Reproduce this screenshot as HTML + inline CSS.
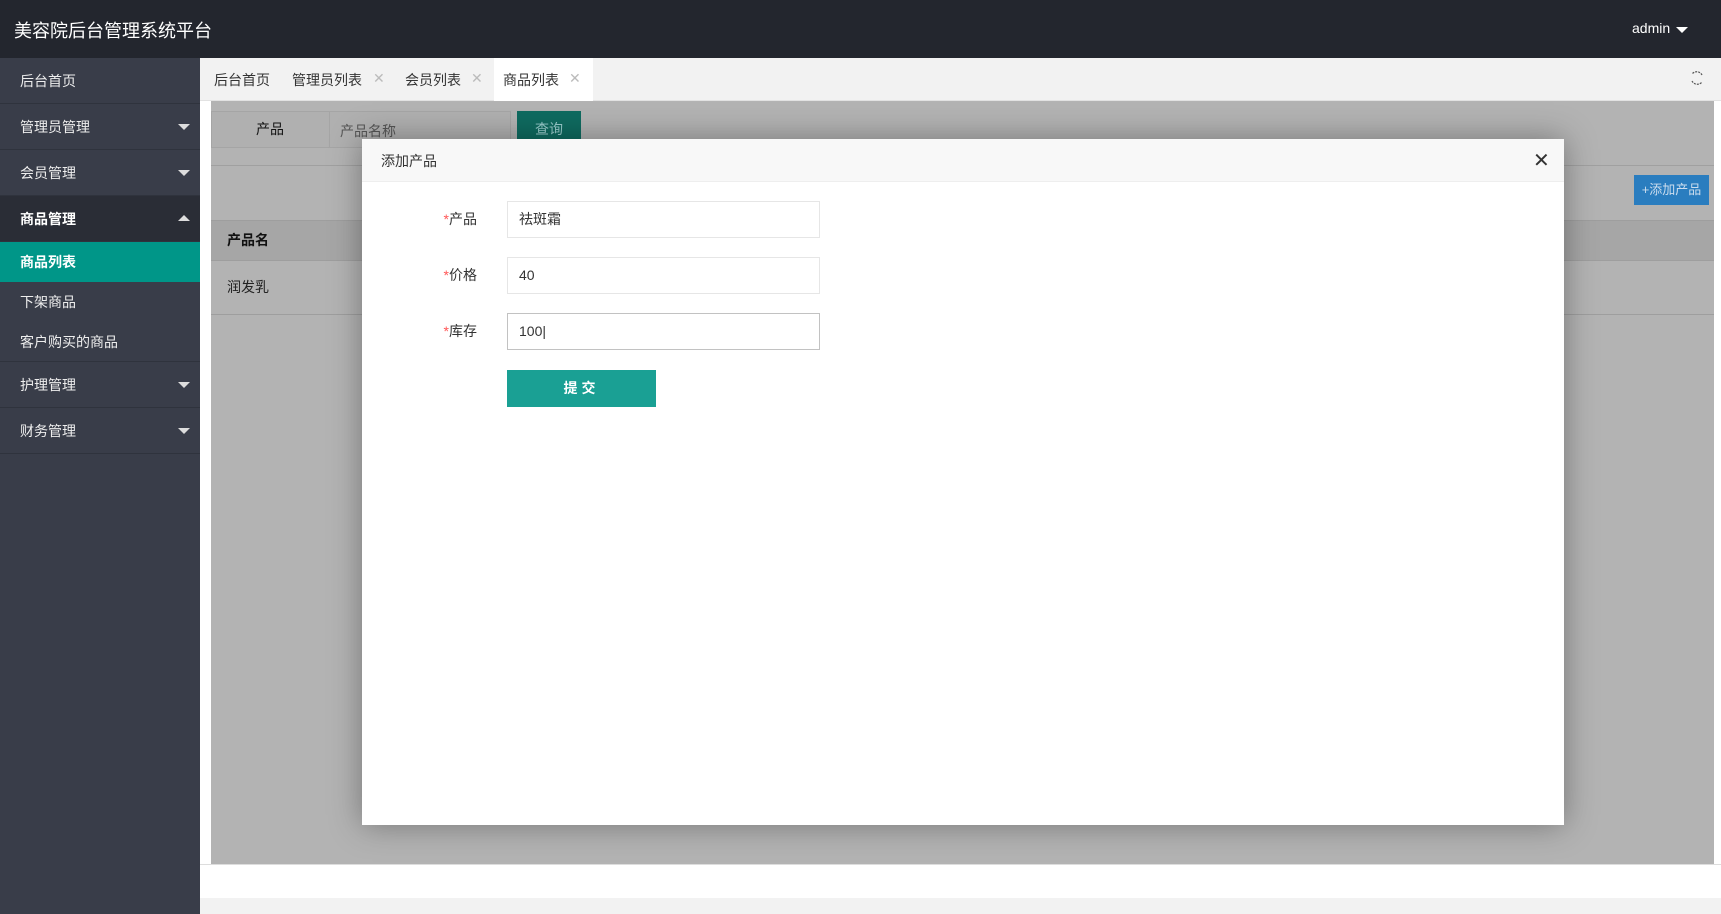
<!DOCTYPE html>
<html><head><meta charset="utf-8"><style>
*{margin:0;padding:0;box-sizing:border-box}
body{width:1721px;height:914px;overflow:hidden;position:relative;background:#fff;font-family:"Liberation Sans","Noto Sans CJK SC",sans-serif;font-size:14px;color:#333}
.a{position:absolute}
.hdr{left:0;top:0;width:1721px;height:58px;background:#23262e}
.side{left:0;top:58px;width:200px;height:856px;background:#393d49}
.mi{position:absolute;left:0;width:200px;color:#eee;font-size:14px;padding-left:20px;border-bottom:1px solid #2f333d}
.tri{position:absolute;right:10px;width:0;height:0;border-left:6px solid transparent;border-right:6px solid transparent}
.dn{border-top:6px solid #ddd;top:20px}
.up{border-bottom:6px solid #ddd;top:19px}
.tabs{left:200px;top:58px;width:1521px;height:43px;background:#f2f2f2;border-bottom:1px solid #e2e2e2}
.tab{position:absolute;top:12px;font-size:14px;color:#333}
.x{position:absolute;top:12px;color:#bbb;font-size:14px}
.gray{left:211px;top:101px;width:1503px;height:763px;background:#b3b3b3}
.modal{left:362px;top:139px;width:1202px;height:686px;background:#fff;box-shadow:0 0 30px rgba(0,0,0,.35)}
.lab{position:absolute;width:115px;text-align:right;left:0;font-size:14px;color:#333}
.inp{position:absolute;left:145px;width:313px;height:37px;border:1px solid #e6e6e6;padding-left:11px;line-height:35px;font-size:14px;color:#333}
</style></head><body>
<div class="a hdr"><div class="a" style="left:14px;top:17px;color:#fff;font-size:18px">美容院后台管理系统平台</div>
<div class="a" style="left:1632px;top:20px;color:#fff;font-size:14px">admin</div>
<div class="a" style="left:1676px;top:27px;border-left:6px solid transparent;border-right:6px solid transparent;border-top:6px solid #fff"></div></div>
<div class="a side">
<div class="mi" style="top:0;height:46px;line-height:46px">后台首页</div>
<div class="mi" style="top:46px;height:46px;line-height:46px">管理员管理<span class="tri dn"></span></div>
<div class="mi" style="top:92px;height:46px;line-height:46px">会员管理<span class="tri dn"></span></div>
<div class="mi" style="top:138px;height:46px;line-height:46px;background:#2a2d36;color:#fff;font-weight:bold">商品管理<span class="tri up"></span></div>
<div class="mi" style="top:184px;height:40px;line-height:40px;background:#009688;color:#fff;font-weight:bold;border:none">商品列表</div>
<div class="mi" style="top:224px;height:40px;line-height:40px;border:none">下架商品</div>
<div class="mi" style="top:264px;height:40px;line-height:40px">客户购买的商品</div>
<div class="mi" style="top:304px;height:46px;line-height:46px">护理管理<span class="tri dn"></span></div>
<div class="mi" style="top:350px;height:46px;line-height:46px">财务管理<span class="tri dn"></span></div>
</div>
<div class="a tabs">
<div class="tab" style="left:14px">后台首页</div>
<div class="tab" style="left:92px">管理员列表</div><div class="x" style="left:173px">✕</div>
<div class="tab" style="left:205px">会员列表</div><div class="x" style="left:271px">✕</div>
<div class="a" style="left:294px;top:0;width:99px;height:43px;background:#fff"></div>
<div class="tab" style="left:303px">商品列表</div><div class="x" style="left:369px">✕</div>
<svg class="a" style="left:1489px;top:12px" width="16" height="16" viewBox="0 0 16 16"><path d="M13 5A6 6 0 0 0 3 4M3 11a6 6 0 0 0 10 1" stroke="#555" stroke-width="1.2" fill="none" stroke-dasharray="2 1"/></svg>
</div>
<div class="a" style="left:200px;top:864px;width:1521px;height:34px;background:#fff;border-top:1px solid #ddd"></div>
<div class="a" style="left:200px;top:898px;width:1521px;height:16px;background:#f2f2f2"></div>
<div class="a gray">
<div class="a" style="left:0;top:10px;width:300px;height:37px;border:1px solid #a5a5a5;background:#b0b0b0"></div>
<div class="a" style="left:0;top:10px;width:119px;height:37px;border-right:1px solid #a5a5a5;text-align:center;line-height:37px;color:#111">产品</div>
<div class="a" style="left:129px;top:20px;color:#555">产品名称</div>
<div class="a" style="left:306px;top:10px;width:64px;height:37px;background:#0f6b60;color:#9cc;text-align:center;line-height:37px">查询</div>
<div class="a" style="left:0;top:64px;width:1503px;height:1px;background:#a0a0a0"></div>
<div class="a" style="left:1423px;top:74px;width:75px;height:30px;background:#2a7dbf;color:#cde;text-align:center;line-height:30px;font-size:13px">+添加产品</div>
<div class="a" style="left:0;top:119px;width:1503px;height:41px;background:#a6a6a6;border-top:1px solid #9e9e9e;border-bottom:1px solid #9e9e9e"></div>
<div class="a" style="left:16px;top:129px;color:#111;font-weight:bold">产品名</div>
<div class="a" style="left:0;top:213px;width:1503px;height:1px;background:#9e9e9e"></div>
<div class="a" style="left:16px;top:176px;color:#222">润发乳</div>
</div>
<div class="a modal">
<div class="a" style="left:0;top:0;width:1202px;height:43px;background:#f8f8f8;border-bottom:1px solid #eee"></div>
<div class="a" style="left:19px;top:12px;font-size:14px;color:#333">添加产品</div>
<div class="a" style="left:1171px;top:9px;font-size:20px;color:#333">✕</div>
<div class="a" style="left:0;top:62px;width:600px;height:300px">
<div class="lab" style="top:8px"><span style="color:#f55">*</span>产品</div>
<div class="inp" style="top:0">祛斑霜</div>
<div class="lab" style="top:64px"><span style="color:#f55">*</span>价格</div>
<div class="inp" style="top:56px">40</div>
<div class="lab" style="top:120px"><span style="color:#f55">*</span>库存</div>
<div class="inp" style="top:112px;border-color:#c2c2c2">100|</div>
<div class="a" style="left:145px;top:169px;width:149px;height:37px;background:#1aa094;color:#fff;text-align:center;line-height:37px;font-weight:bold;letter-spacing:4px">提交</div>
</div>
</div>
</body></html>
